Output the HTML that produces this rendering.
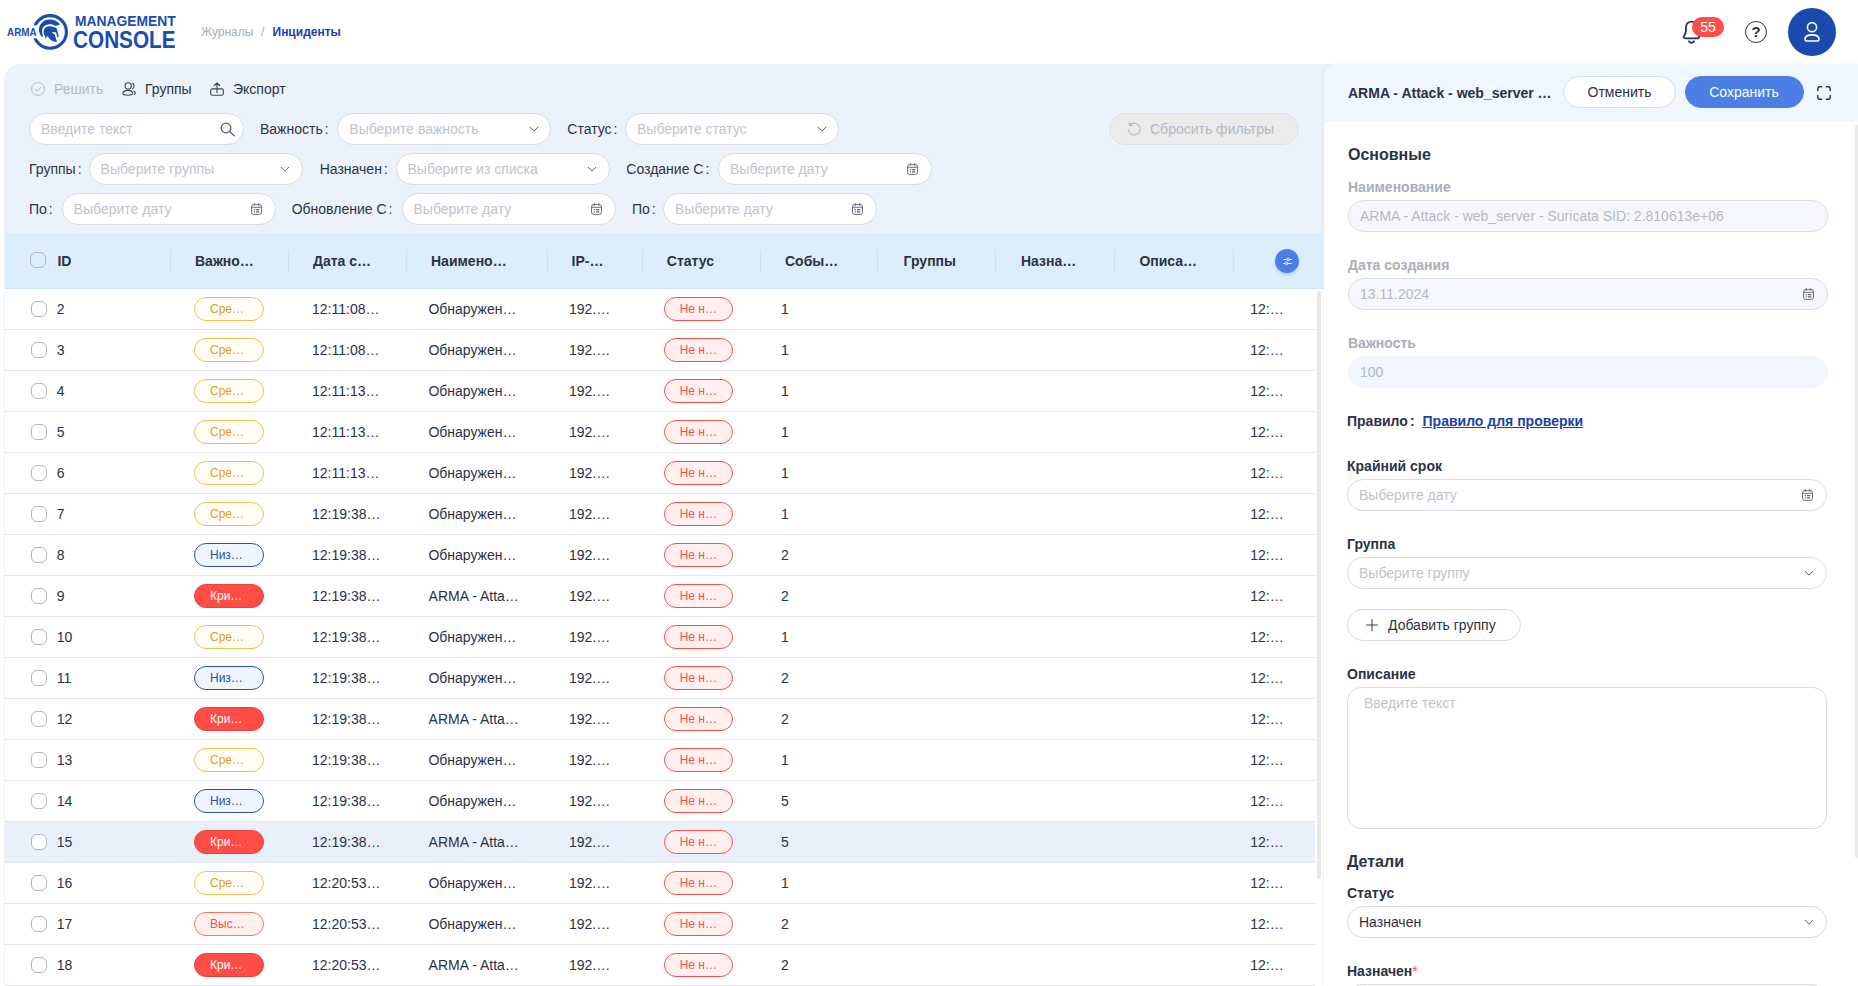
<!DOCTYPE html>
<html lang="ru">
<head>
<meta charset="utf-8">
<title>ARMA Management Console</title>
<style>
*{box-sizing:border-box;margin:0;padding:0}
html,body{width:1858px;height:986px;overflow:hidden;background:#fff}
body{position:relative;font-family:"Liberation Sans",Arial,sans-serif;font-size:14px;color:#2b3245;line-height:22px}
.abs{position:absolute}
svg{display:block}
/* header */
#hdr{position:absolute;left:0;top:0;width:1858px;height:64px;background:#fff}
.bc{position:absolute;top:21px;font-size:12px;line-height:22px;white-space:nowrap}
/* left panel */
#lp{position:absolute;left:4px;top:64px;width:1330px;height:922px;background:#ebf2fc;border-radius:16px 0 0 0}
.tb{position:absolute;top:14px;height:22px;display:flex;align-items:center;white-space:nowrap}
.tb svg{margin-right:9px}
.flt{position:absolute;height:32px;display:flex;align-items:center;white-space:nowrap}
.lbl{white-space:nowrap;line-height:22px}
.lbl i{font-style:normal;margin-left:2px}
.ctl{width:214px;height:32px;background:#fff;border:1px solid #d9dce2;border-radius:16px;padding:0 11px;line-height:30px;color:#bfc3cb}
.ctl svg{position:absolute}
/* table */
#th{position:absolute;left:5px;top:233px;width:1318px;height:56px;background:#dceefb;border-bottom:1px solid #d3e2ef}
.h{position:absolute;top:17px;font-weight:bold;line-height:22px;white-space:nowrap;color:#2b3245}
.sep{position:absolute;top:17px;width:1px;height:22px;background:#cfdfee}
.cb{position:absolute;width:16px;height:16px;border:1px solid #b3b6bd;border-radius:6px;background:#fff}
#tb{position:absolute;left:5px;top:289px;width:1310px}
.r{position:relative;height:41px;border-bottom:1px solid #e3e5e9;background:#fff}
.r.sel{background:#e9f0fb}
.r span{position:absolute;top:9px;line-height:22px;white-space:nowrap}
.r .cb{top:12px;left:26px}
.r .tag{position:absolute;top:8px;height:24px;width:70px;border-radius:12px;border:1px solid;font-size:12px;line-height:22px !important;text-align:left;padding-left:15px}
.r .t-m{color:#e0a01e;border-color:#f2c04c;background:#fffdf6}
.r .t-l{color:#2450a8;border-color:#2754b4;background:#eff5fe}
.r .t-c{color:#fff;border-color:#e6443f;background:#ff4d46}
.r .t-h{color:#f5524b;border-color:#f7766f;background:#ffefee}
.r .t-s{color:#f5524b;border-color:#f5524b;background:#fff0ef;width:69.3px !important}
/* right panel */
#rp{position:absolute;left:1323.5px;top:64px;width:535px;height:922px;background:#fff;border-radius:12px 0 0 0;box-shadow:-1px 0 3px rgba(60,80,120,.07);overflow:hidden}
#rph{position:absolute;left:0;top:0;width:535px;height:58px;background:#f0f6fe}
.btn{position:absolute;height:32px;border-radius:16px;line-height:30px;text-align:center;border:1px solid #d9dce2;background:#fff;white-space:nowrap}
.fl{position:absolute;font-weight:bold;line-height:22px;white-space:nowrap}
.fl.d{color:#a9aeb9}
.fi{position:absolute;height:32px;border-radius:16px;border:1px solid #d9dce2;background:#fff;line-height:30px;padding:0 11px;white-space:nowrap;color:#bfc3cb}
.fi.dis{background:#f4f8fe;color:#b3b8c2}
.fi svg{position:absolute}
</style>
</head>
<body>
<div id="hdr">
<svg class="abs" style="left:0;top:0" width="190" height="64" viewBox="0 0 190 64">
<g fill="#1b4cb0">
<circle cx="50.1" cy="31.9" r="16.3" fill="none" stroke="#1b4cb0" stroke-width="3.1"/>
<rect x="30" y="25.3" width="9.5" height="13" fill="#fff"/>
<path d="M41.8 37C39.5 34 38.5 31 39 28.5C40 23 44.5 19.6 49.5 19.6C54 19.6 57.5 21.5 60 24.5L55.4 26C53.8 24.8 51.8 24.2 49.4 24.3C45 24.5 42.1 27.5 42.1 31C42.1 33 42.5 35 43.3 36.5Z"/>
<path d="M49.4 26.3C53 26.3 55.8 27.5 56.7 28.5L58.9 36.8L57.3 36.9L56 32.2L51.3 32.3L54.8 34.4L57 41.9C52.5 41.8 49.5 40 48 36.4L47.2 36.2L44.8 39.6L45.3 36.5C44 35 43.4 33 43.6 31.2C44 28 46.5 26.3 49.4 26.3Z"/>
<text x="7" y="35.8" font-family="Liberation Sans, Arial, sans-serif" font-weight="bold" font-size="10" textLength="29.6" lengthAdjust="spacingAndGlyphs">ARMA</text>
<text x="75" y="26" font-family="Liberation Sans, Arial, sans-serif" font-weight="bold" font-size="14" textLength="100.8" lengthAdjust="spacingAndGlyphs">MANAGEMENT</text>
<text x="73.1" y="48.3" font-family="Liberation Sans, Arial, sans-serif" font-weight="bold" font-size="24.4" textLength="102.4" lengthAdjust="spacingAndGlyphs">CONSOLE</text>
</g>
</svg>
<span class="bc" style="left:201px;color:#a9aeb9">Журналы</span>
<span class="bc" style="left:261px;color:#a9aeb9">/</span>
<span class="bc" style="left:272.5px;color:#1b42a8;font-weight:bold">Инциденты</span>
<svg class="abs" style="left:1681px;top:19px" width="22" height="27" viewBox="0 0 22 27" fill="none" stroke="#2b3245" stroke-width="1.8" stroke-linecap="round" stroke-linejoin="round">
<path d="M10.5 2.6C7 2.6 4.9 5.4 4.9 9V12C4.9 14 4.2 15.3 3.2 16.6C2.2 17.9 2.7 19.4 4.6 19.4H16.4C18.3 19.4 18.8 17.9 17.8 16.6C16.8 15.3 16.1 14 16.1 12V9C16.1 5.4 14 2.6 10.5 2.6Z"/>
<path d="M8 22.3C8.6 23.3 9.5 23.8 10.5 23.8C11.5 23.8 12.4 23.3 13 22.3"/>
</svg>
<div class="abs" style="left:1692px;top:17px;width:32px;height:20px;border-radius:10px;background:#ff4d49;color:#fff;font-size:14px;line-height:20px;text-align:center">55</div>
<div class="abs" style="left:1745px;top:21px;width:22px;height:22px;border-radius:11px;border:1.8px solid #2b3245;color:#2b3245;font-weight:bold;font-size:15px;line-height:19px;text-align:center">?</div>
<div class="abs" style="left:1788px;top:8px;width:48px;height:48px;border-radius:24px;background:#1a4aae"></div>
<svg class="abs" style="left:1802px;top:20px" width="20" height="24" viewBox="0 0 20 24" fill="none" stroke="#fff" stroke-width="1.6">
<circle cx="10" cy="7.2" r="4.6"/>
<path d="M3 19.4C3 16.6 6 14.9 10 14.9C14 14.9 17 16.6 17 19.4C17 20.4 16.4 21 15.4 21H4.6C3.6 21 3 20.4 3 19.4Z" stroke-linejoin="round"/>
</svg>
</div>
<div id="lp">
<div class="tb" style="left:27px;color:#b3b8c2"><svg width="14" height="14" viewBox="0 0 14 14" fill="none" stroke="#b3b8c2" stroke-width="1"><circle cx="7" cy="7" r="6.4"/><path d="M4.2 7.3L6.2 9.2L9.9 5.2" stroke-linecap="round" stroke-linejoin="round"/></svg>Решить</div>
<div class="tb" style="left:118px"><svg width="14" height="14" viewBox="0 0 14 14" fill="none" stroke="#3b4256" stroke-width="1.1" stroke-linecap="round"><circle cx="6.2" cy="3.9" r="3.1"/><path d="M.8 11.6C.8 9.7 3 8.4 6.2 8.4C9.4 8.4 10.6 9.7 10.6 11.6C10.6 12.6 9.6 13.2 6.2 13.2C2 13.2 .8 12.6 .8 11.6Z"/><path d="M10.6 1.2C12.3 2 12.6 5 10.8 6.6"/><path d="M11.8 9.3C13.4 10 13.8 11.6 12.4 12.3"/></svg>Группы</div>
<div class="tb" style="left:206px"><svg width="14" height="14" viewBox="0 0 14 14" fill="none" stroke="#3b4256" stroke-width="1.1" stroke-linecap="round" stroke-linejoin="round"><rect x=".7" y="6.9" width="12.6" height="6.4" rx="1.6"/><path d="M7 10.6V.9M4.3 3.5L7 .8L9.7 3.5"/></svg>Экспорт</div>
<div class="ctl abs" style="left:25px;top:49px;width:215px">Введите текст<svg style="right:7.8px;top:7.5px" width="15" height="15" viewBox="0 0 15 15" fill="none" stroke="#5a6172" stroke-width="1.3" stroke-linecap="round"><circle cx="6" cy="6" r="4.8"/><path d="M9.6 9.6L14.2 13.8"/></svg></div>
<span class="lbl abs" style="left:256px;top:54px">Важность<i>:</i></span>
<div class="ctl abs" style="left:333.3px;top:49px;width:214px">Выберите важность<svg style="right:11.5px;top:11.7px" width="10" height="7" viewBox="0 0 10 7" fill="none" stroke="#5a6172" stroke-width="1" stroke-linecap="round" stroke-linejoin="round"><path d="M1.2 1.3L5 5.2L8.8 1.3"/></svg></div>
<span class="lbl abs" style="left:563.3px;top:54px">Статус<i>:</i></span>
<div class="ctl abs" style="left:621px;top:49px;width:214px">Выберите статус<svg style="right:11.5px;top:11.7px" width="10" height="7" viewBox="0 0 10 7" fill="none" stroke="#5a6172" stroke-width="1" stroke-linecap="round" stroke-linejoin="round"><path d="M1.2 1.3L5 5.2L8.8 1.3"/></svg></div>
<span class="lbl abs" style="left:25px;top:94px">Группы<i>:</i></span>
<div class="ctl abs" style="left:84.6px;top:89px;width:214px">Выберите группы<svg style="right:11.5px;top:11.7px" width="10" height="7" viewBox="0 0 10 7" fill="none" stroke="#5a6172" stroke-width="1" stroke-linecap="round" stroke-linejoin="round"><path d="M1.2 1.3L5 5.2L8.8 1.3"/></svg></div>
<span class="lbl abs" style="left:315.7px;top:94px">Назначен<i>:</i></span>
<div class="ctl abs" style="left:391.5px;top:89px;width:214px">Выберите из списка<svg style="right:11.5px;top:11.7px" width="10" height="7" viewBox="0 0 10 7" fill="none" stroke="#5a6172" stroke-width="1" stroke-linecap="round" stroke-linejoin="round"><path d="M1.2 1.3L5 5.2L8.8 1.3"/></svg></div>
<span class="lbl abs" style="left:622.3px;top:94px">Создание С<i>:</i></span>
<div class="ctl abs" style="left:714px;top:89px;width:214px">Выберите дату<svg style="right:12.6px;top:9.3px" width="11" height="12" viewBox="0 0 11 12" fill="none" stroke="#5a6172" stroke-width=".9"><rect x=".5" y="1.6" width="10" height="9.8" rx="2.2"/><path d="M.5 4.3H10.5"/><path d="M3.2 .4V2.4M7.8 .4V2.4" stroke-linecap="round"/><path d="M2.7 6.6H3.9M5 6.6H8.3M2.7 8.9H3.9M5 8.9H8.3" stroke-width="1.1"/></svg></div>
<span class="lbl abs" style="left:25px;top:134px">По<i>:</i></span>
<div class="ctl abs" style="left:57.7px;top:129px;width:214px">Выберите дату<svg style="right:12.6px;top:9.3px" width="11" height="12" viewBox="0 0 11 12" fill="none" stroke="#5a6172" stroke-width=".9"><rect x=".5" y="1.6" width="10" height="9.8" rx="2.2"/><path d="M.5 4.3H10.5"/><path d="M3.2 .4V2.4M7.8 .4V2.4" stroke-linecap="round"/><path d="M2.7 6.6H3.9M5 6.6H8.3M2.7 8.9H3.9M5 8.9H8.3" stroke-width="1.1"/></svg></div>
<span class="lbl abs" style="left:287.7px;top:134px">Обновление С<i>:</i></span>
<div class="ctl abs" style="left:397.5px;top:129px;width:214px">Выберите дату<svg style="right:12.6px;top:9.3px" width="11" height="12" viewBox="0 0 11 12" fill="none" stroke="#5a6172" stroke-width=".9"><rect x=".5" y="1.6" width="10" height="9.8" rx="2.2"/><path d="M.5 4.3H10.5"/><path d="M3.2 .4V2.4M7.8 .4V2.4" stroke-linecap="round"/><path d="M2.7 6.6H3.9M5 6.6H8.3M2.7 8.9H3.9M5 8.9H8.3" stroke-width="1.1"/></svg></div>
<span class="lbl abs" style="left:628px;top:134px">По<i>:</i></span>
<div class="ctl abs" style="left:659px;top:129px;width:214px">Выберите дату<svg style="right:12.6px;top:9.3px" width="11" height="12" viewBox="0 0 11 12" fill="none" stroke="#5a6172" stroke-width=".9"><rect x=".5" y="1.6" width="10" height="9.8" rx="2.2"/><path d="M.5 4.3H10.5"/><path d="M3.2 .4V2.4M7.8 .4V2.4" stroke-linecap="round"/><path d="M2.7 6.6H3.9M5 6.6H8.3M2.7 8.9H3.9M5 8.9H8.3" stroke-width="1.1"/></svg></div>
<div class="abs" style="left:1105px;top:49px;width:190px;height:32px;border-radius:16px;background:#ebebeb;border:1px solid #e0e0e1;color:#b3b8c2;line-height:30px;white-space:nowrap"><svg class="abs" style="left:17px;top:8px" width="14" height="14" viewBox="0 0 14 14" fill="none" stroke="#b3b8c2" stroke-width="1.1" stroke-linecap="round" stroke-linejoin="round"><path d="M2.6 3.2A5.9 5.9 0 1 1 1.2 7.8"/><path d="M2.4 .8L2.5 3.4L5.1 3.3"/></svg><span class="abs" style="left:40px;top:0">Сбросить фильтры</span></div>
</div>
<div id="th">
<div class="cb" style="left:25px;top:19px;background:transparent"></div>
<span class="h" style="left:52.4px">ID</span><span class="h" style="left:190.0px">Важно…</span><span class="h" style="left:308.0px">Дата с…</span><span class="h" style="left:426.0px">Наимено…</span><span class="h" style="left:566.6px">IP-…</span><span class="h" style="left:661.8px">Статус</span><span class="h" style="left:780.0px">Собы…</span><span class="h" style="left:898.6px">Группы</span><span class="h" style="left:1016.0px">Назна…</span><span class="h" style="left:1134.4px">Описа…</span>
<i class="sep" style="left:164.5px"></i><i class="sep" style="left:282.8px"></i><i class="sep" style="left:400.7px"></i><i class="sep" style="left:541.8px"></i><i class="sep" style="left:636.7px"></i><i class="sep" style="left:754.7px"></i><i class="sep" style="left:872.2px"></i><i class="sep" style="left:990.2px"></i><i class="sep" style="left:1108.7px"></i><i class="sep" style="left:1227.9px"></i>
<div class="abs" style="left:1270px;top:16px;width:24px;height:24px;border-radius:12px;background:#4c7fe6;box-shadow:0 2px 3px rgba(76,127,230,.25)"><svg class="abs" style="left:7.5px;top:7.5px" width="9" height="9" viewBox="0 0 10 10" fill="none" stroke="#fff" stroke-width="1" stroke-linecap="round"><path d="M.7 2.8H4.2M7.4 2.8H9.3M.7 7.2H2.4M5.6 7.2H9.3"/><circle cx="5.8" cy="2.8" r="1.4"/><circle cx="4" cy="7.2" r="1.4"/></svg></div>
</div>
<div class="abs" style="left:5px;top:289px;width:1321px;height:697px;background:#fff"></div>
<div id="tb">
<div class="r"><i class="cb"></i><span style="left:51.8px">2</span><span class="tag t-m" style="left:189px">Сре…</span><span style="left:307px">12:11:08…</span><span style="left:423.4px">Обнаружен…</span><span style="left:564px">192.…</span><span class="tag t-s" style="left:658.7px">Не н…</span><span style="left:776px">1</span><span style="left:1245.3px">12:…</span></div>
<div class="r"><i class="cb"></i><span style="left:51.8px">3</span><span class="tag t-m" style="left:189px">Сре…</span><span style="left:307px">12:11:08…</span><span style="left:423.4px">Обнаружен…</span><span style="left:564px">192.…</span><span class="tag t-s" style="left:658.7px">Не н…</span><span style="left:776px">1</span><span style="left:1245.3px">12:…</span></div>
<div class="r"><i class="cb"></i><span style="left:51.8px">4</span><span class="tag t-m" style="left:189px">Сре…</span><span style="left:307px">12:11:13…</span><span style="left:423.4px">Обнаружен…</span><span style="left:564px">192.…</span><span class="tag t-s" style="left:658.7px">Не н…</span><span style="left:776px">1</span><span style="left:1245.3px">12:…</span></div>
<div class="r"><i class="cb"></i><span style="left:51.8px">5</span><span class="tag t-m" style="left:189px">Сре…</span><span style="left:307px">12:11:13…</span><span style="left:423.4px">Обнаружен…</span><span style="left:564px">192.…</span><span class="tag t-s" style="left:658.7px">Не н…</span><span style="left:776px">1</span><span style="left:1245.3px">12:…</span></div>
<div class="r"><i class="cb"></i><span style="left:51.8px">6</span><span class="tag t-m" style="left:189px">Сре…</span><span style="left:307px">12:11:13…</span><span style="left:423.4px">Обнаружен…</span><span style="left:564px">192.…</span><span class="tag t-s" style="left:658.7px">Не н…</span><span style="left:776px">1</span><span style="left:1245.3px">12:…</span></div>
<div class="r"><i class="cb"></i><span style="left:51.8px">7</span><span class="tag t-m" style="left:189px">Сре…</span><span style="left:307px">12:19:38…</span><span style="left:423.4px">Обнаружен…</span><span style="left:564px">192.…</span><span class="tag t-s" style="left:658.7px">Не н…</span><span style="left:776px">1</span><span style="left:1245.3px">12:…</span></div>
<div class="r"><i class="cb"></i><span style="left:51.8px">8</span><span class="tag t-l" style="left:189px">Низ…</span><span style="left:307px">12:19:38…</span><span style="left:423.4px">Обнаружен…</span><span style="left:564px">192.…</span><span class="tag t-s" style="left:658.7px">Не н…</span><span style="left:776px">2</span><span style="left:1245.3px">12:…</span></div>
<div class="r"><i class="cb"></i><span style="left:51.8px">9</span><span class="tag t-c" style="left:189px">Кри…</span><span style="left:307px">12:19:38…</span><span style="left:423.6px">ARMA - Atta…</span><span style="left:564px">192.…</span><span class="tag t-s" style="left:658.7px">Не н…</span><span style="left:776px">2</span><span style="left:1245.3px">12:…</span></div>
<div class="r"><i class="cb"></i><span style="left:51.8px">10</span><span class="tag t-m" style="left:189px">Сре…</span><span style="left:307px">12:19:38…</span><span style="left:423.4px">Обнаружен…</span><span style="left:564px">192.…</span><span class="tag t-s" style="left:658.7px">Не н…</span><span style="left:776px">1</span><span style="left:1245.3px">12:…</span></div>
<div class="r"><i class="cb"></i><span style="left:51.8px">11</span><span class="tag t-l" style="left:189px">Низ…</span><span style="left:307px">12:19:38…</span><span style="left:423.4px">Обнаружен…</span><span style="left:564px">192.…</span><span class="tag t-s" style="left:658.7px">Не н…</span><span style="left:776px">2</span><span style="left:1245.3px">12:…</span></div>
<div class="r"><i class="cb"></i><span style="left:51.8px">12</span><span class="tag t-c" style="left:189px">Кри…</span><span style="left:307px">12:19:38…</span><span style="left:423.6px">ARMA - Atta…</span><span style="left:564px">192.…</span><span class="tag t-s" style="left:658.7px">Не н…</span><span style="left:776px">2</span><span style="left:1245.3px">12:…</span></div>
<div class="r"><i class="cb"></i><span style="left:51.8px">13</span><span class="tag t-m" style="left:189px">Сре…</span><span style="left:307px">12:19:38…</span><span style="left:423.4px">Обнаружен…</span><span style="left:564px">192.…</span><span class="tag t-s" style="left:658.7px">Не н…</span><span style="left:776px">1</span><span style="left:1245.3px">12:…</span></div>
<div class="r"><i class="cb"></i><span style="left:51.8px">14</span><span class="tag t-l" style="left:189px">Низ…</span><span style="left:307px">12:19:38…</span><span style="left:423.4px">Обнаружен…</span><span style="left:564px">192.…</span><span class="tag t-s" style="left:658.7px">Не н…</span><span style="left:776px">5</span><span style="left:1245.3px">12:…</span></div>
<div class="r sel"><i class="cb"></i><span style="left:51.8px">15</span><span class="tag t-c" style="left:189px">Кри…</span><span style="left:307px">12:19:38…</span><span style="left:423.6px">ARMA - Atta…</span><span style="left:564px">192.…</span><span class="tag t-s" style="left:658.7px">Не н…</span><span style="left:776px">5</span><span style="left:1245.3px">12:…</span></div>
<div class="r"><i class="cb"></i><span style="left:51.8px">16</span><span class="tag t-m" style="left:189px">Сре…</span><span style="left:307px">12:20:53…</span><span style="left:423.4px">Обнаружен…</span><span style="left:564px">192.…</span><span class="tag t-s" style="left:658.7px">Не н…</span><span style="left:776px">1</span><span style="left:1245.3px">12:…</span></div>
<div class="r"><i class="cb"></i><span style="left:51.8px">17</span><span class="tag t-h" style="left:189px">Выс…</span><span style="left:307px">12:20:53…</span><span style="left:423.4px">Обнаружен…</span><span style="left:564px">192.…</span><span class="tag t-s" style="left:658.7px">Не н…</span><span style="left:776px">2</span><span style="left:1245.3px">12:…</span></div>
<div class="r"><i class="cb"></i><span style="left:51.8px">18</span><span class="tag t-c" style="left:189px">Кри…</span><span style="left:307px">12:20:53…</span><span style="left:423.6px">ARMA - Atta…</span><span style="left:564px">192.…</span><span class="tag t-s" style="left:658.7px">Не н…</span><span style="left:776px">2</span><span style="left:1245.3px">12:…</span></div>
</div>
<div class="abs" style="left:1317px;top:291px;width:4px;height:588px;border-radius:2px;background:#e9e9ea"></div>
<div id="rp"><div id="rph"></div>
<div class="abs" style="left:24.5px;top:18px;font-weight:bold;line-height:22px;white-space:nowrap">ARMA - Attack - web_server …</div>
<div class="btn" style="left:239.5px;top:12px;width:113px">Отменить</div>
<div class="btn" style="left:361px;top:12px;width:119px;background:#4c7fe6;border-color:#4c7fe6;color:#fff">Сохранить</div>
<svg class="abs" style="left:493px;top:22px" width="14" height="14" viewBox="0 0 14 14" fill="none" stroke="#2b3245" stroke-width="1.4" stroke-linecap="round" stroke-linejoin="round"><path d="M.8 4.6V2.8C.8 1.7 1.7.8 2.8.8H4.6M9.4.8H11.2C12.3.8 13.2 1.7 13.2 2.8V4.6M13.2 9.4V11.2C13.2 12.3 12.3 13.2 11.2 13.2H9.4M4.6 13.2H2.8C1.7 13.2.8 12.3.8 11.2V9.4"/></svg>
<div class="fl" style="left:24.5px;top:78.6px;font-size:16px;line-height:24px">Основные</div>
<div class="fl d" style="left:24.5px;top:112px">Наименование</div>
<div class="fi dis" style="left:24.5px;top:136px;width:480px">ARMA - Attack - web_server - Suricata SID: 2.810613e+06</div>
<div class="fl d" style="left:24.5px;top:190px">Дата создания</div>
<div class="fi dis" style="left:24.5px;top:214px;width:480px">13.11.2024<svg style="right:12.6px;top:9.3px" width="11" height="12" viewBox="0 0 11 12" fill="none" stroke="#5a6172" stroke-width=".9"><rect x=".5" y="1.6" width="10" height="9.8" rx="2.2"/><path d="M.5 4.3H10.5"/><path d="M3.2 .4V2.4M7.8 .4V2.4" stroke-linecap="round"/><path d="M2.7 6.6H3.9M5 6.6H8.3M2.7 8.9H3.9M5 8.9H8.3" stroke-width="1.1"/></svg></div>
<div class="fl d" style="left:24.5px;top:268px">Важность</div>
<div class="fi dis" style="left:24.5px;top:292px;width:480px;border-color:#f1f6fe;background:#f1f6fe">100</div>
<div class="fl" style="left:23.5px;top:345.7px">Правило<i style="font-style:normal;margin-left:2px">:</i><span style="margin-left:8px;color:#1b42a8;text-decoration:underline">Правило для проверки</span></div>
<div class="fl" style="left:23.5px;top:391px">Крайний срок</div>
<div class="fi" style="left:23.5px;top:415px;width:479.5px">Выберите дату<svg style="right:12.6px;top:9.3px" width="11" height="12" viewBox="0 0 11 12" fill="none" stroke="#5a6172" stroke-width=".9"><rect x=".5" y="1.6" width="10" height="9.8" rx="2.2"/><path d="M.5 4.3H10.5"/><path d="M3.2 .4V2.4M7.8 .4V2.4" stroke-linecap="round"/><path d="M2.7 6.6H3.9M5 6.6H8.3M2.7 8.9H3.9M5 8.9H8.3" stroke-width="1.1"/></svg></div>
<div class="fl" style="left:23.5px;top:469px">Группа</div>
<div class="fi" style="left:23.5px;top:493px;width:479.5px">Выберите группу<svg style="right:11.5px;top:11.7px" width="10" height="7" viewBox="0 0 10 7" fill="none" stroke="#5a6172" stroke-width="1" stroke-linecap="round" stroke-linejoin="round"><path d="M1.2 1.3L5 5.2L8.8 1.3"/></svg></div>
<div class="btn" style="left:23.5px;top:545px;width:174px;text-align:left"><svg class="abs" style="left:18px;top:9px" width="12" height="12" viewBox="0 0 12 12" fill="none" stroke="#3b4256" stroke-width="1.1" stroke-linecap="round"><path d="M6 .6V11.4M.6 6H11.4"/></svg><span class="abs" style="left:40px;top:0">Добавить группу</span></div>
<div class="fl" style="left:23.5px;top:599.4px">Описание</div>
<div class="abs" style="left:23.5px;top:623px;width:479.5px;height:142px;border:1px solid #d9dce2;border-radius:14px;padding:4px 16px;color:#bfc3cb;line-height:22px">Введите текст</div>
<div class="fl" style="left:23.5px;top:785.6px;font-size:16px;line-height:24px">Детали</div>
<div class="fl" style="left:23.5px;top:818.4px">Статус</div>
<div class="fi" style="left:23.5px;top:842px;width:479.5px;color:#2b3245">Назначен<svg style="right:11.5px;top:11.7px" width="10" height="7" viewBox="0 0 10 7" fill="none" stroke="#5a6172" stroke-width="1" stroke-linecap="round" stroke-linejoin="round"><path d="M1.2 1.3L5 5.2L8.8 1.3"/></svg></div>
<div class="fl" style="left:23.5px;top:896.4px">Назначен<span style="color:#ff4d49;font-weight:normal">*</span></div>
<div class="fi" style="left:23.5px;top:920.4px;width:479.5px"></div>
<div class="abs" style="left:531px;top:61px;width:4px;height:733px;border-radius:2px;background:#e9e9ea"></div>
</div>
</body>
</html>
